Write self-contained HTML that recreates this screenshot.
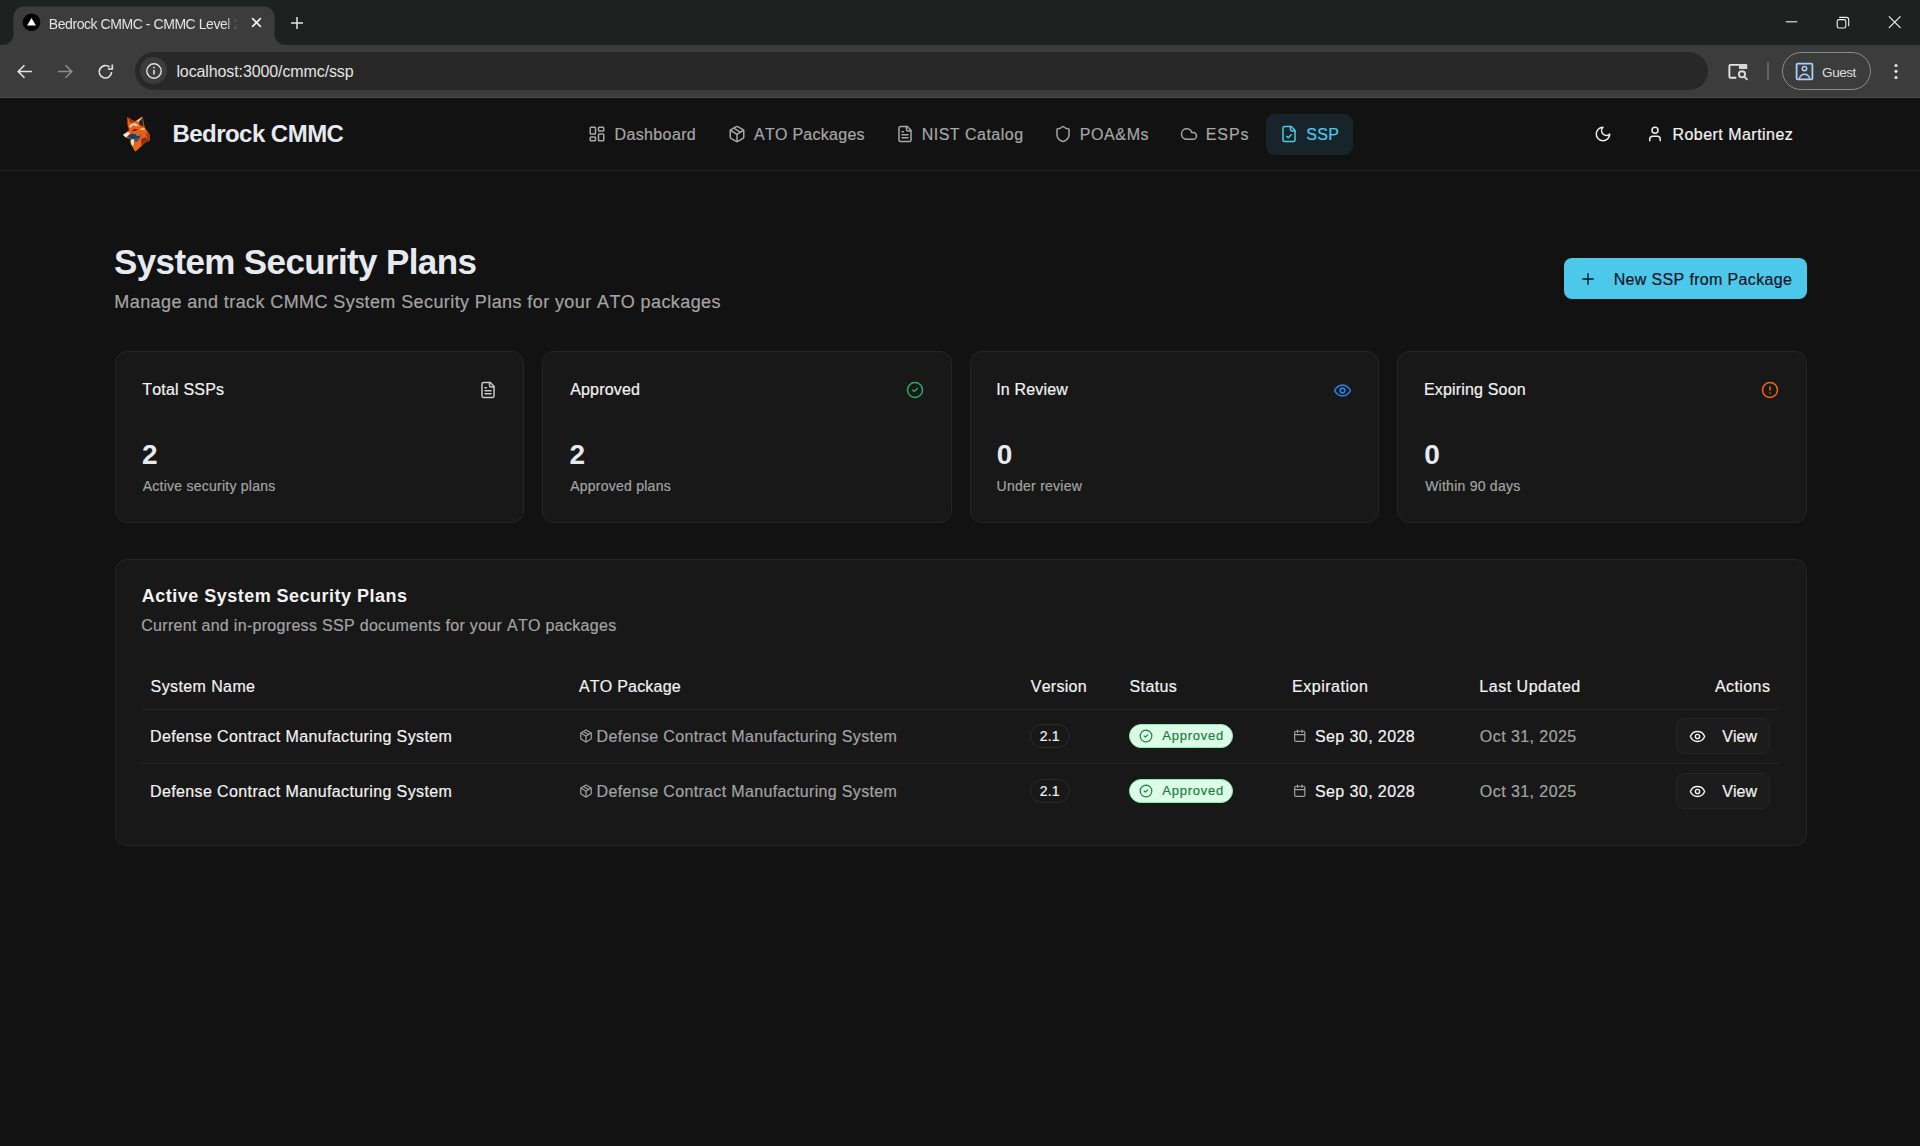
<!DOCTYPE html><html><head><meta charset="utf-8"><title>Bedrock CMMC</title><style>
html,body{margin:0;padding:0;width:1920px;height:1146px;overflow:hidden;background:#121212;font-family:"Liberation Sans", sans-serif;}
.t{position:absolute;white-space:nowrap;font-kerning:none;font-family:"Liberation Sans", sans-serif;-webkit-text-stroke:0.2px currentColor;}.b{-webkit-text-stroke:0;}
svg{display:block;}
</style></head><body>
<div style="position:absolute;left:0px;top:0px;width:1920px;height:45px;background:#1f2020;"></div>
<div style="position:absolute;left:0px;top:45px;width:1920px;height:52px;background:#3c3c3c;"></div>
<div style="position:absolute;left:0px;top:97px;width:1920px;height:1px;background:#4a4a4a;"></div>
<svg style="position:absolute;left:0;top:0" width="300" height="45" viewBox="0 0 300 45"><path d="M2.5 45 A11 11 0 0 0 13.5 34 L13.5 16.5 A10 10 0 0 1 23.5 6.5 L264.5 6.5 A10 10 0 0 1 274.5 16.5 L274.5 34 A11 11 0 0 0 285.5 45 Z" fill="#3c3c3c"/></svg>
<svg style="position:absolute;left:22px;top:13px" width="19" height="19" viewBox="0 0 19 19"><circle cx="9.5" cy="9.3" r="8.8" fill="#000"/><path d="M9.5 4.9 L13.9 12.6 L5.1 12.6 Z" fill="#fff"/></svg>
<div style="position:absolute;left:49px;top:10px;width:190px;height:26px;overflow:hidden;-webkit-mask-image:linear-gradient(90deg,#000 176px,transparent 189px);mask-image:linear-gradient(90deg,#000 176px,transparent 189px);">
<div class="t b" style="left:-0.15px;top:7px;font-size:14px;line-height:14px;font-weight:400;color:#e3e3e3;letter-spacing:-0.440px;">Bedrock CMMC - CMMC Level 2 Compliance</div>
</div>
<svg style="position:absolute;left:250px;top:16px" width="13" height="13" viewBox="0 0 13 13"><path d="M2.6 2.6 L10.4 10.4 M10.4 2.6 L2.6 10.4" stroke="#f0f0f0" stroke-width="1.6" stroke-linecap="round"/></svg>
<svg style="position:absolute;left:290px;top:15.5px" width="14" height="14" viewBox="0 0 14 14"><path d="M7 1 V13 M1 7 H13" stroke="#e3e3e3" stroke-width="1.5"/></svg>
<svg style="position:absolute;left:1780px;top:10px" width="130" height="25" viewBox="0 0 130 25"><path d="M5.8 11.8 H17.2" stroke="#f0f0f0" stroke-width="1.1"/><rect x="57.2" y="9.6" width="8.6" height="8.4" rx="1.8" stroke="#f0f0f0" stroke-width="1.1" fill="none"/><path d="M59.2 7.4 H66.4 A2.3 2.3 0 0 1 68.7 9.7 V16.2" stroke="#f0f0f0" stroke-width="1.1" fill="none"/><path d="M108.9 6.3 L120.5 17.9 M120.5 6.3 L108.9 17.9" stroke="#f0f0f0" stroke-width="1.2"/></svg>
<svg style="position:absolute;left:15px;top:62px" width="20" height="20" viewBox="0 0 20 20"><path d="M17 9.5 H3.5 M9.5 3.2 L3.2 9.5 L9.5 15.8" stroke="#e3e3e3" stroke-width="1.6" fill="none"/></svg>
<svg style="position:absolute;left:55px;top:62px" width="20" height="20" viewBox="0 0 20 20"><path d="M3 9.5 H16.5 M10.5 3.2 L16.8 9.5 L10.5 15.8" stroke="#8d8d8d" stroke-width="1.6" fill="none"/></svg>
<svg style="position:absolute;left:96px;top:62px" width="20" height="20" viewBox="0 0 20 20"><path d="M15.6 10 A6.2 6.2 0 1 1 13.6 5.2" stroke="#e3e3e3" stroke-width="1.6" fill="none"/><path d="M16.3 2.5 V7 H11.8" stroke="#e3e3e3" stroke-width="1.6" fill="none"/></svg>
<div style="position:absolute;left:135px;top:52px;width:1573px;height:38px;background:#282828;border-radius:19px;"></div>
<div style="position:absolute;left:140px;top:57px;width:27px;height:27px;border-radius:50%;background:#3c3c3c;"></div>
<svg style="position:absolute;left:145px;top:62px" width="18" height="18" viewBox="0 0 18 18"><circle cx="9" cy="9" r="7.2" stroke="#e3e3e3" stroke-width="1.4" fill="none"/><path d="M9 8 V12.6" stroke="#e3e3e3" stroke-width="1.6"/><circle cx="9" cy="5.6" r="0.95" fill="#e3e3e3"/></svg>
<div class="t b" style="left:176.42px;top:64px;font-size:16px;line-height:16px;font-weight:400;color:#e3e3e3;letter-spacing:-0.108px;">localhost:3000/cmmc/ssp</div>
<svg style="position:absolute;left:1726px;top:61px" width="24" height="22" viewBox="0 0 24 22"><path d="M10.3 16.7 H4.4 Q3.4 16.7 3.4 15.7 V4.8 Q3.4 3.9 4.4 3.9 H13.5" stroke="#e3e3e3" stroke-width="1.9" fill="none"/><rect x="12.9" y="3.0" width="8.4" height="5.1" rx="0.9" fill="#d6d6d6"/><circle cx="16" cy="13.3" r="3.1" stroke="#d9d9d9" stroke-width="1.9" fill="none"/><path d="M18.4 15.8 L20.9 18.3" stroke="#d9d9d9" stroke-width="1.9" stroke-linecap="round"/></svg>
<div style="position:absolute;left:1767px;top:62px;width:2px;height:18px;background:#606060;"></div>
<div style="position:absolute;left:1782px;top:52px;width:87px;height:36px;border:1px solid #8a8a8a;border-radius:19px;"></div>
<svg style="position:absolute;left:1795px;top:62px" width="19" height="19" viewBox="0 0 19 19"><rect x="1.6" y="1.6" width="15.8" height="15.8" rx="1.2" stroke="#a8cffa" stroke-width="1.8" fill="none"/><circle cx="9.5" cy="6.6" r="2.2" stroke="#a8cffa" stroke-width="1.5" fill="none"/><path d="M4.2 16.8 Q5.5 12.2 9.5 12.2 Q13.5 12.2 14.8 16.8" stroke="#a8cffa" stroke-width="1.5" fill="none"/></svg>
<div class="t b" style="left:1822.12px;top:66px;font-size:13.5px;line-height:13.5px;font-weight:400;color:#dcdcdc;letter-spacing:-0.460px;">Guest</div>
<svg style="position:absolute;left:1890px;top:60px" width="12" height="24" viewBox="0 0 12 24"><circle cx="6" cy="5.5" r="1.6" fill="#e3e3e3"/><circle cx="6" cy="11.3" r="1.6" fill="#e3e3e3"/><circle cx="6" cy="17.5" r="1.6" fill="#e3e3e3"/></svg>
<div style="position:absolute;left:0px;top:170px;width:1920px;height:1px;background:#242525;"></div>
<svg style="position:absolute;left:118px;top:112px" width="40" height="44" viewBox="0 0 1042 1146"><path d="M240 130 L430 250 L635 120 L690 400 L830 600 L835 745 L700 800 L450 1030 L330 800 L330 710 L200 665 L130 590 L290 470 L250 350 Z" fill="#ec5f12"/><path d="M262 160 L415 250 L340 310 Z" fill="#a33018"/><path d="M635 125 L480 245 L545 255 Z" fill="#f1e6d0"/><path d="M550 250 L635 165 L660 385 L555 330 Z" fill="#1b2636"/><path d="M645 140 L700 410 L665 395 Z" fill="#b83a14"/><path d="M300 360 L360 290 L460 290 L540 360 L470 370 L390 345 L310 430 Z" fill="#e8cc9a"/><path d="M560 440 L690 405 L700 470 L600 470 Z" fill="#e0bf8e"/><path d="M370 470 L470 440 L520 465 L400 500 Z" fill="#3a1a10"/><path d="M130 590 L260 520 L330 560 L240 640 L195 660 Z" fill="#f4ecdc"/><path d="M240 640 L330 560 L600 590 L560 690 L420 705 L330 705 Z" fill="#243f63"/><path d="M470 578 L590 592 L560 620 L470 606 Z" fill="#8fb5d8"/><path d="M330 730 L420 705 L415 850 L365 890 L330 800 Z" fill="#efdcba"/><path d="M420 700 L560 690 L500 780 L430 770 Z" fill="#33567f"/><path d="M415 850 L500 780 L600 720 L650 850 L450 1030 L365 890 Z" fill="#ef6614"/><path d="M600 710 L700 660 L835 745 L700 800 L610 880 Z" fill="#922c15"/><path d="M720 520 L830 600 L835 745 L760 680 Z" fill="#a9361a"/><path d="M600 480 L700 470 L740 560 L640 620 Z" fill="#e8600f"/></svg>
<div class="t b" style="left:172.39px;top:122px;font-size:24px;line-height:24px;font-weight:700;color:#e6eaf0;letter-spacing:-0.526px;">Bedrock CMMC</div>
<svg style="position:absolute;left:588.00px;top:125.40px;" width="18" height="18" viewBox="0 0 24 24" fill="none" stroke="#a6a6a6" stroke-width="2" stroke-linecap="round" stroke-linejoin="round"><rect width="7" height="9" x="3" y="3" rx="1"/><rect width="7" height="5" x="14" y="3" rx="1"/><rect width="7" height="9" x="14" y="12" rx="1"/><rect width="7" height="5" x="3" y="16" rx="1"/></svg>
<div class="t" style="left:614.59px;top:127px;font-size:16px;line-height:16px;font-weight:400;color:#a6a6a6;letter-spacing:0.359px;">Dashboard</div>
<svg style="position:absolute;left:727.50px;top:125.40px;" width="18" height="18" viewBox="0 0 24 24" fill="none" stroke="#a6a6a6" stroke-width="2" stroke-linecap="round" stroke-linejoin="round"><path d="M11 21.73a2 2 0 0 0 2 0l7-4A2 2 0 0 0 21 16V8a2 2 0 0 0-1-1.73l-7-4a2 2 0 0 0-2 0l-7 4A2 2 0 0 0 3 8v8a2 2 0 0 0 1 1.73z"/><path d="M12 22V12"/><path d="m3.3 7 7.703 4.734a2 2 0 0 0 1.994 0L20.7 7"/><path d="m7.5 4.27 9 5.15"/></svg>
<div class="t" style="left:753.97px;top:127px;font-size:16px;line-height:16px;font-weight:400;color:#a6a6a6;letter-spacing:0.273px;">ATO Packages</div>
<svg style="position:absolute;left:895.50px;top:125.40px;" width="18" height="18" viewBox="0 0 24 24" fill="none" stroke="#a6a6a6" stroke-width="2" stroke-linecap="round" stroke-linejoin="round"><path d="M15 2H6a2 2 0 0 0-2 2v16a2 2 0 0 0 2 2h12a2 2 0 0 0 2-2V7Z"/><path d="M14 2v4a2 2 0 0 0 2 2h4"/><path d="M10 9H8"/><path d="M16 13H8"/><path d="M16 17H8"/></svg>
<div class="t" style="left:921.69px;top:127px;font-size:16px;line-height:16px;font-weight:400;color:#a6a6a6;letter-spacing:0.482px;">NIST Catalog</div>
<svg style="position:absolute;left:1053.50px;top:125.40px;" width="18" height="18" viewBox="0 0 24 24" fill="none" stroke="#a6a6a6" stroke-width="2" stroke-linecap="round" stroke-linejoin="round"><path d="M20 13c0 5-3.5 7.5-7.66 8.95a1 1 0 0 1-.67-.01C7.5 20.5 4 18 4 13V6a1 1 0 0 1 1-1c2 0 4.5-1.2 6.24-2.72a1.17 1.17 0 0 1 1.52 0C14.51 3.81 17 5 19 5a1 1 0 0 1 1 1z"/></svg>
<div class="t" style="left:1079.69px;top:127px;font-size:16px;line-height:16px;font-weight:400;color:#a6a6a6;letter-spacing:0.620px;">POA&amp;Ms</div>
<svg style="position:absolute;left:1179.50px;top:125.40px;" width="18" height="18" viewBox="0 0 24 24" fill="none" stroke="#a6a6a6" stroke-width="2" stroke-linecap="round" stroke-linejoin="round"><path d="M17.5 19H9a7 7 0 1 1 6.71-9h1.79a4.5 4.5 0 1 1 0 9Z"/></svg>
<div class="t" style="left:1205.69px;top:127px;font-size:16px;line-height:16px;font-weight:400;color:#a6a6a6;letter-spacing:0.958px;">ESPs</div>
<div style="position:absolute;left:1266px;top:114px;width:87px;height:40.5px;background:#172429;border-radius:9px;"></div>
<svg style="position:absolute;left:1279.50px;top:125.40px;" width="18" height="18" viewBox="0 0 24 24" fill="none" stroke="#4cc9ea" stroke-width="2" stroke-linecap="round" stroke-linejoin="round"><path d="M15 2H6a2 2 0 0 0-2 2v16a2 2 0 0 0 2 2h12a2 2 0 0 0 2-2V7Z"/><path d="M14 2v4a2 2 0 0 0 2 2h4"/><path d="m9 15 2 2 4-4"/></svg>
<div class="t" style="left:1306.27px;top:127px;font-size:16px;line-height:16px;font-weight:400;color:#4cc9ea;letter-spacing:0.277px;">SSP</div>
<svg style="position:absolute;left:1593.50px;top:125.30px;" width="18" height="18" viewBox="0 0 24 24" fill="none" stroke="#ececec" stroke-width="2" stroke-linecap="round" stroke-linejoin="round"><path d="M12 3a6 6 0 0 0 9 9 9 9 0 1 1-9-9Z"/></svg>
<svg style="position:absolute;left:1646.20px;top:125.40px;" width="18" height="18" viewBox="0 0 24 24" fill="none" stroke="#ececec" stroke-width="2" stroke-linecap="round" stroke-linejoin="round"><path d="M19 21v-2a4 4 0 0 0-4-4H9a4 4 0 0 0-4 4v2"/><circle cx="12" cy="7" r="4"/></svg>
<div class="t" style="left:1672.44px;top:127px;font-size:16px;line-height:16px;font-weight:400;color:#f2f2f2;letter-spacing:0.467px;">Robert Martinez</div>
<div class="t b" style="left:113.99px;top:244px;font-size:35px;line-height:35px;font-weight:700;color:#e6eaf0;letter-spacing:-0.626px;">System Security Plans</div>
<div class="t" style="left:114.32px;top:293px;font-size:18px;line-height:18px;font-weight:400;color:#a3a3a3;letter-spacing:0.406px;">Manage and track CMMC System Security Plans for your ATO packages</div>
<div style="position:absolute;left:1564px;top:258px;width:243px;height:41px;background:#4cc9ea;border-radius:8px;"></div>
<svg style="position:absolute;left:1578.60px;top:270.00px;" width="18" height="18" viewBox="0 0 24 24" fill="none" stroke="#0b1220" stroke-width="1.8" stroke-linecap="round" stroke-linejoin="round"><path d="M5 12h14"/><path d="M12 5v14"/></svg>
<div class="t" style="left:1613.69px;top:272px;font-size:16px;line-height:16px;font-weight:400;color:#0b1220;letter-spacing:0.350px;">New SSP from Package</div>
<div style="position:absolute;left:115px;top:351px;width:407px;height:170px;background:#181818;border:1px solid #242525;border-radius:12px;"></div>
<div class="t" style="left:142.34px;top:382px;font-size:16px;line-height:16px;font-weight:400;color:#f2f2f2;letter-spacing:0.180px;">Total SSPs</div>
<svg style="position:absolute;left:478.50px;top:381.00px;" width="18" height="18" viewBox="0 0 24 24" fill="none" stroke="#c8c8c8" stroke-width="2" stroke-linecap="round" stroke-linejoin="round"><path d="M15 2H6a2 2 0 0 0-2 2v16a2 2 0 0 0 2 2h12a2 2 0 0 0 2-2V7Z"/><path d="M14 2v4a2 2 0 0 0 2 2h4"/><path d="M10 9H8"/><path d="M16 13H8"/><path d="M16 17H8"/></svg>
<div class="t b" style="left:141.93px;top:441px;font-size:28px;line-height:28px;font-weight:700;color:#e6eaf0;letter-spacing:0.000px;">2</div>
<div class="t" style="left:142.67px;top:479px;font-size:14px;line-height:14px;font-weight:400;color:#a3a3a3;letter-spacing:0.250px;">Active security plans</div>
<div style="position:absolute;left:542px;top:351px;width:408px;height:170px;background:#181818;border:1px solid #242525;border-radius:12px;"></div>
<div class="t" style="left:570.17px;top:382px;font-size:16px;line-height:16px;font-weight:400;color:#f2f2f2;letter-spacing:0.180px;">Approved</div>
<svg style="position:absolute;left:906.00px;top:381.00px;" width="18" height="18" viewBox="0 0 24 24" fill="none" stroke="#2aa965" stroke-width="2" stroke-linecap="round" stroke-linejoin="round"><circle cx="12" cy="12" r="10"/><path d="m9 12 2 2 4-4"/></svg>
<div class="t b" style="left:569.43px;top:441px;font-size:28px;line-height:28px;font-weight:700;color:#e6eaf0;letter-spacing:0.000px;">2</div>
<div class="t" style="left:570.17px;top:479px;font-size:14px;line-height:14px;font-weight:400;color:#a3a3a3;letter-spacing:0.250px;">Approved plans</div>
<div style="position:absolute;left:970px;top:351px;width:407px;height:170px;background:#181818;border:1px solid #242525;border-radius:12px;"></div>
<div class="t" style="left:996.22px;top:382px;font-size:16px;line-height:16px;font-weight:400;color:#f2f2f2;letter-spacing:0.180px;">In Review</div>
<svg style="position:absolute;left:1332.70px;top:380.50px;" width="19" height="19" viewBox="0 0 24 24" fill="none" stroke="#2186eb" stroke-width="1.9" stroke-linecap="round" stroke-linejoin="round"><path d="M2 12s3-7 10-7 10 7 10 7-3 7-10 7-10-7-10-7Z"/><circle cx="12" cy="12" r="3"/></svg>
<div class="t b" style="left:996.79px;top:441px;font-size:28px;line-height:28px;font-weight:700;color:#e6eaf0;letter-spacing:0.000px;">0</div>
<div class="t" style="left:996.62px;top:479px;font-size:14px;line-height:14px;font-weight:400;color:#a3a3a3;letter-spacing:0.250px;">Under review</div>
<div style="position:absolute;left:1397px;top:351px;width:408px;height:170px;background:#181818;border:1px solid #242525;border-radius:12px;"></div>
<div class="t" style="left:1423.89px;top:382px;font-size:16px;line-height:16px;font-weight:400;color:#f2f2f2;letter-spacing:0.180px;">Expiring Soon</div>
<svg style="position:absolute;left:1761.00px;top:381.00px;" width="18" height="18" viewBox="0 0 24 24" fill="none" stroke="#f96316" stroke-width="2" stroke-linecap="round" stroke-linejoin="round"><circle cx="12" cy="12" r="10"/><line x1="12" x2="12" y1="8" y2="12"/><line x1="12" x2="12.01" y1="16" y2="16"/></svg>
<div class="t b" style="left:1424.29px;top:441px;font-size:28px;line-height:28px;font-weight:700;color:#e6eaf0;letter-spacing:0.000px;">0</div>
<div class="t" style="left:1425.14px;top:479px;font-size:14px;line-height:14px;font-weight:400;color:#a3a3a3;letter-spacing:0.250px;">Within 90 days</div>
<div style="position:absolute;left:115px;top:559px;width:1690px;height:285px;background:#181818;border:1px solid #242525;border-radius:12px;"></div>
<div class="t b" style="left:141.80px;top:587px;font-size:18px;line-height:18px;font-weight:700;color:#f2f2f2;letter-spacing:0.482px;">Active System Security Plans</div>
<div class="t" style="left:141.19px;top:618px;font-size:16px;line-height:16px;font-weight:400;color:#a3a3a3;letter-spacing:0.308px;">Current and in-progress SSP documents for your ATO packages</div>
<div class="t" style="left:150.57px;top:679px;font-size:16px;line-height:16px;font-weight:400;color:#f2f2f2;letter-spacing:0.397px;">System Name</div>
<div class="t" style="left:578.97px;top:679px;font-size:16px;line-height:16px;font-weight:400;color:#f2f2f2;letter-spacing:0.214px;">ATO Package</div>
<div class="t" style="left:1030.73px;top:679px;font-size:16px;line-height:16px;font-weight:400;color:#f2f2f2;letter-spacing:0.277px;">Version</div>
<div class="t" style="left:1129.47px;top:679px;font-size:16px;line-height:16px;font-weight:400;color:#f2f2f2;letter-spacing:0.409px;">Status</div>
<div class="t" style="left:1292.09px;top:679px;font-size:16px;line-height:16px;font-weight:400;color:#f2f2f2;letter-spacing:0.511px;">Expiration</div>
<div class="t" style="left:1479.29px;top:679px;font-size:16px;line-height:16px;font-weight:400;color:#f2f2f2;letter-spacing:0.524px;">Last Updated</div>
<div class="t" style="left:1714.97px;top:679px;font-size:16px;line-height:16px;font-weight:400;color:#f2f2f2;letter-spacing:0.407px;">Actions</div>
<div style="position:absolute;left:142px;top:709px;width:1637px;height:1px;background:#242525;"></div>
<div style="position:absolute;left:142px;top:763px;width:1637px;height:1px;background:#242525;"></div>
<div class="t" style="left:149.99px;top:729px;font-size:16px;line-height:16px;font-weight:400;color:#f2f2f2;letter-spacing:0.382px;">Defense Contract Manufacturing System</div>
<svg style="position:absolute;left:578.70px;top:729.00px;" width="14" height="14" viewBox="0 0 24 24" fill="none" stroke="#a3a3a3" stroke-width="2" stroke-linecap="round" stroke-linejoin="round"><path d="M11 21.73a2 2 0 0 0 2 0l7-4A2 2 0 0 0 21 16V8a2 2 0 0 0-1-1.73l-7-4a2 2 0 0 0-2 0l-7 4A2 2 0 0 0 3 8v8a2 2 0 0 0 1 1.73z"/><path d="M12 22V12"/><path d="m3.3 7 7.703 4.734a2 2 0 0 0 1.994 0L20.7 7"/><path d="m7.5 4.27 9 5.15"/></svg>
<div class="t" style="left:596.59px;top:729px;font-size:16px;line-height:16px;font-weight:400;color:#a3a3a3;letter-spacing:0.337px;">Defense Contract Manufacturing System</div>
<div style="position:absolute;left:1030px;top:724px;width:38px;height:22px;border:1px solid #2a2a2a;border-radius:12px;"></div>
<div class="t" style="left:1039.70px;top:729px;font-size:14px;line-height:14px;font-weight:400;color:#f2f2f2;letter-spacing:0.213px;">2.1</div>
<div style="position:absolute;left:1129px;top:724px;width:102px;height:22px;background:#dcfce7;border:1px solid #86efac;border-radius:12px;"></div>
<svg style="position:absolute;left:1139.00px;top:728.60px;" width="14" height="14" viewBox="0 0 24 24" fill="none" stroke="#15803d" stroke-width="2" stroke-linecap="round" stroke-linejoin="round"><circle cx="12" cy="12" r="10"/><path d="m9 12 2 2 4-4"/></svg>
<div class="t" style="left:1162.27px;top:729px;font-size:13px;line-height:13px;font-weight:400;color:#15803d;letter-spacing:0.759px;">Approved</div>
<svg style="position:absolute;left:1293.25px;top:729.45px;" width="13.5" height="13.5" viewBox="0 0 24 24" fill="none" stroke="#a3a3a3" stroke-width="2" stroke-linecap="round" stroke-linejoin="round"><path d="M8 2v4"/><path d="M16 2v4"/><rect width="18" height="18" x="3" y="4" rx="2"/><path d="M3 10h18"/></svg>
<div class="t" style="left:1314.97px;top:729px;font-size:16px;line-height:16px;font-weight:400;color:#f2f2f2;letter-spacing:0.412px;">Sep 30, 2028</div>
<div class="t" style="left:1479.84px;top:729px;font-size:16px;line-height:16px;font-weight:400;color:#a3a3a3;letter-spacing:0.438px;">Oct 31, 2025</div>
<div style="position:absolute;left:1676px;top:718px;width:92px;height:34px;background:#1c1c1c;border:1px solid #242525;border-radius:8px;"></div>
<svg style="position:absolute;left:1688.90px;top:727.50px;" width="17" height="17" viewBox="0 0 24 24" fill="none" stroke="#f2f2f2" stroke-width="2" stroke-linecap="round" stroke-linejoin="round"><path d="M2.062 12.348a1 1 0 0 1 0-.696 10.75 10.75 0 0 1 19.876 0 1 1 0 0 1 0 .696 10.75 10.75 0 0 1-19.876 0"/><circle cx="12" cy="12" r="3"/></svg>
<div class="t" style="left:1722.13px;top:729px;font-size:16px;line-height:16px;font-weight:400;color:#f2f2f2;letter-spacing:0.084px;">View</div>
<div class="t" style="left:149.99px;top:784px;font-size:16px;line-height:16px;font-weight:400;color:#f2f2f2;letter-spacing:0.382px;">Defense Contract Manufacturing System</div>
<svg style="position:absolute;left:578.70px;top:784.00px;" width="14" height="14" viewBox="0 0 24 24" fill="none" stroke="#a3a3a3" stroke-width="2" stroke-linecap="round" stroke-linejoin="round"><path d="M11 21.73a2 2 0 0 0 2 0l7-4A2 2 0 0 0 21 16V8a2 2 0 0 0-1-1.73l-7-4a2 2 0 0 0-2 0l-7 4A2 2 0 0 0 3 8v8a2 2 0 0 0 1 1.73z"/><path d="M12 22V12"/><path d="m3.3 7 7.703 4.734a2 2 0 0 0 1.994 0L20.7 7"/><path d="m7.5 4.27 9 5.15"/></svg>
<div class="t" style="left:596.59px;top:784px;font-size:16px;line-height:16px;font-weight:400;color:#a3a3a3;letter-spacing:0.337px;">Defense Contract Manufacturing System</div>
<div style="position:absolute;left:1030px;top:779px;width:38px;height:22px;border:1px solid #2a2a2a;border-radius:12px;"></div>
<div class="t" style="left:1039.70px;top:784px;font-size:14px;line-height:14px;font-weight:400;color:#f2f2f2;letter-spacing:0.213px;">2.1</div>
<div style="position:absolute;left:1129px;top:779px;width:102px;height:22px;background:#dcfce7;border:1px solid #86efac;border-radius:12px;"></div>
<svg style="position:absolute;left:1139.00px;top:783.60px;" width="14" height="14" viewBox="0 0 24 24" fill="none" stroke="#15803d" stroke-width="2" stroke-linecap="round" stroke-linejoin="round"><circle cx="12" cy="12" r="10"/><path d="m9 12 2 2 4-4"/></svg>
<div class="t" style="left:1162.27px;top:784px;font-size:13px;line-height:13px;font-weight:400;color:#15803d;letter-spacing:0.759px;">Approved</div>
<svg style="position:absolute;left:1293.25px;top:784.45px;" width="13.5" height="13.5" viewBox="0 0 24 24" fill="none" stroke="#a3a3a3" stroke-width="2" stroke-linecap="round" stroke-linejoin="round"><path d="M8 2v4"/><path d="M16 2v4"/><rect width="18" height="18" x="3" y="4" rx="2"/><path d="M3 10h18"/></svg>
<div class="t" style="left:1314.97px;top:784px;font-size:16px;line-height:16px;font-weight:400;color:#f2f2f2;letter-spacing:0.412px;">Sep 30, 2028</div>
<div class="t" style="left:1479.84px;top:784px;font-size:16px;line-height:16px;font-weight:400;color:#a3a3a3;letter-spacing:0.438px;">Oct 31, 2025</div>
<div style="position:absolute;left:1676px;top:773px;width:92px;height:34px;background:#1c1c1c;border:1px solid #242525;border-radius:8px;"></div>
<svg style="position:absolute;left:1688.90px;top:782.50px;" width="17" height="17" viewBox="0 0 24 24" fill="none" stroke="#f2f2f2" stroke-width="2" stroke-linecap="round" stroke-linejoin="round"><path d="M2.062 12.348a1 1 0 0 1 0-.696 10.75 10.75 0 0 1 19.876 0 1 1 0 0 1 0 .696 10.75 10.75 0 0 1-19.876 0"/><circle cx="12" cy="12" r="3"/></svg>
<div class="t" style="left:1722.13px;top:784px;font-size:16px;line-height:16px;font-weight:400;color:#f2f2f2;letter-spacing:0.084px;">View</div>
</body></html>
